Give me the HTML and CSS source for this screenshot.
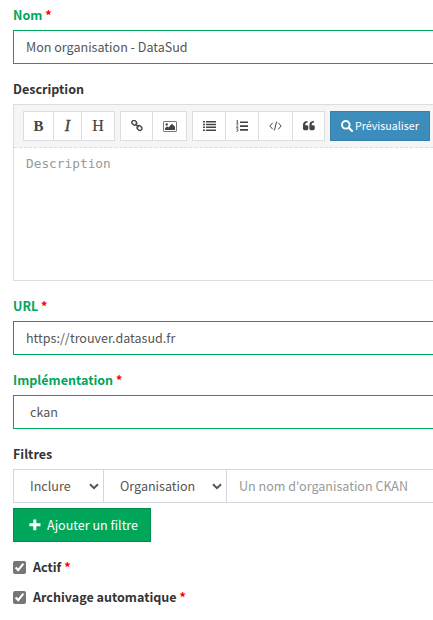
FILE: index.html
```html
<!DOCTYPE html>
<html lang="fr">
<head>
<meta charset="utf-8">
<title>Mon organisation</title>
<link rel="stylesheet" href="styles.css">
</head>
<body>
<form class="form">
  <div class="group valid">
    <label class="label" for="name">Nom <span class="req">*</span></label>
    <input class="control" id="name" type="text" value="Mon organisation - DataSud">
  </div>

  <div class="group">
    <label class="label" for="desc">Description</label>
    <div class="editor">
      <div class="toolbar">
        <div class="btn-group">
          <button type="button" class="tool w31"><b class="glyph">B</b></button>
          <button type="button" class="tool w29"><i class="glyph italic">I</i></button>
          <button type="button" class="tool w34"><span class="glyph heading">H</span></button>
        </div>
        <div class="btn-group">
          <button type="button" class="tool w33"><svg width="12" height="12" viewBox="0 0 12 12" fill="none" stroke="#444" stroke-width="1.4"><rect x="-2.5" y="-2" width="5" height="4" rx="1.6" transform="translate(3.300 2.800) rotate(45)"/><rect x="-2.5" y="-2" width="5" height="4" rx="1.6" transform="translate(8.500 8) rotate(45)"/><path d="M4.300 3.800l3.400 3.400"/></svg></button>
          <button type="button" class="tool w35"><svg width="14" height="11" viewBox="0 0 14 11"><rect x=".5" y=".5" width="13" height="10" rx=".6" fill="none" stroke="#777"/><circle cx="3.700" cy="3.400" r="1.200" fill="#444"/><path d="M2 9V7.200l2-2 1.300 1.300L9 2.800l3 3V9z" fill="#444"/></svg></button>
        </div>
        <div class="btn-group">
          <button type="button" class="tool w34"><svg width="13" height="10" viewBox="0 0 13 10" fill="#444"><path d="M0 0h2v1.500H0zM3 0h10v1.500H3zM0 2.800h2v1.500H0zM3 2.800h10v1.500H3zM0 5.600h2v1.500H0zM3 5.600h10v1.500H3zM0 8.400h2v1.500H0zM3 8.400h10v1.500H3z"/></svg></button>
          <button type="button" class="tool w34"><svg width="12" height="12" viewBox="0 0 12 12"><path d="M4 1.400h8v1.700H4zM4 5.200h8v1.700H4zM4 9h8v1.700H4z" fill="#444"/><path d="M.3 1L1.500.4V3.200M.3 3.200h2.200M.3 5c.5-.7 1.900-.5 1.700.4C1.900 6.100.5 6.500.4 7.400h2M.3 8.900h1.900L1.200 10c1.600 0 1.100 1.600-.9 1.400" fill="none" stroke="#444" stroke-width=".8"/></svg></button>
          <button type="button" class="tool w35"><svg width="13" height="10" viewBox="0 0 13 10" fill="none" stroke="#444" stroke-width="1"><path d="M3.700 1.800L.8 5l2.900 3.200M9.300 1.800L12.200 5 9.300 8.200M7.600.6L5.400 9.400"/></svg></button>
          <button type="button" class="tool w33"><svg width="12" height="10" viewBox="0 0 12 10" fill="#444"><path id="q" d="M5.300 5.600v2.200q0 1.400-1.400 1.400H1.500Q0 9.200 0 7.800V4Q0 .4 3.600 0H4.500v1.500H4Q2.200 1.700 2.200 3.700v.5h1.700q1.400 0 1.400 1.400z"/><use href="#q" x="6.400"/></svg></button>
        </div>
        <button type="button" class="preview"><svg width="12" height="12" viewBox="0 0 12 12" fill="none" stroke="#fff"><circle cx="4.800" cy="4.800" r="3.800" stroke-width="1.900"/><path d="M7.800 7.800l3.200 3.200" stroke-width="2.200" stroke-linecap="round"/></svg><span>Prévisualiser</span></button>
      </div>
      <textarea class="area" id="desc" placeholder="Description"></textarea>
    </div>
  </div>

  <div class="group valid">
    <label class="label" for="url">URL <span class="req">*</span></label>
    <input class="control" id="url" type="text" value="https://trouver.datasud.fr">
  </div>

  <div class="group valid">
    <label class="label" for="impl">Implémentation <span class="req">*</span></label>
    <select class="control select" id="impl"><option>ckan</option></select>
  </div>

  <div class="group">
    <label class="label">Filtres</label>
    <div class="filters">
      <div class="picker mode"><select class="control select"><option>Inclure</option></select><svg class="chevron" width="10" height="7" viewBox="0 0 10 7"><path d="M1 1.200l4 4 4-4" fill="none" stroke="#555" stroke-width="2"/></svg></div>
      <div class="picker kind"><select class="control select"><option>Organisation</option></select><svg class="chevron" width="10" height="7" viewBox="0 0 10 7"><path d="M1 1.200l4 4 4-4" fill="none" stroke="#555" stroke-width="2"/></svg></div>
      <input class="control value" type="text" placeholder="Un nom d'organisation CKAN">
    </div>
    <button type="button" class="add"><svg width="12" height="12" viewBox="0 0 12 12"><path d="M4.300 0.500h3v3.800h4.200v3H7.300v3.900h-3V7.300H.3v-3h4z" fill="#fff"/></svg><span>Ajouter un filtre</span></button>
  </div>

  <label class="check"><input type="checkbox" class="box" checked><span>Actif <span class="req">*</span></span></label>
  <label class="check"><input type="checkbox" class="box" checked><span>Archivage automatique <span class="req">*</span></span></label>
</form>
</body>
</html>
```
FILE: styles.css
```css
* { box-sizing: border-box; }
body {
  margin: 0;
  background: #fff;
  color: #333;
  font: 12.55px/20px "Noto Sans CJK SC", "Noto Sans", sans-serif;
}
button, input, select, textarea { font: inherit; margin: 0; }
svg { display: block; flex: none; }
.form { padding: 5px 0 0 13px; }
.group { margin-bottom: 15px; }
.label { display: block; height: 20px; margin-bottom: 5px; font-weight: 700; }
.valid .label { color: #00a65a; }
.label .req, .check .req { color: #f00; }
.control {
  display: block;
  width: 100%;
  height: 34px;
  padding: 5px 12px 7px;
  border: 1px solid #d2d6de;
  border-right-width: 0;
  border-radius: 0;
  background: #fff;
  color: #555;
  appearance: none;
  outline: none;
}
.valid .control { border-color: #00a65a; }
.select { padding: 6px 12px 6px 16px; }
::placeholder { color: #999; opacity: 1; }

.editor { height: 177px; border: 1px solid #ddd; border-right: 0; }
.toolbar {
  display: flex;
  gap: 5px;
  height: 43px;
  padding: 6px 0 6px 9px;
  background: #f5f5f5;
  border-bottom: 1px dashed #ddd;
}
.btn-group { display: flex; }
.tool {
  display: flex;
  align-items: center;
  justify-content: center;
  height: 30px;
  padding: 0;
  border: 1px solid #ddd;
  background: #fff;
  color: #444;
}
.tool + .tool { margin-left: -1px; }
.w29 { width: 29px; }
.w31 { width: 31px; }
.w33 { width: 33px; }
.w34 { width: 34px; }
.w35 { width: 35px; }
.glyph { font: 700 15px/20px "Liberation Serif", serif; }
.italic { font-weight: 400; font-style: italic; font-size: 16px; -webkit-text-stroke: .4px #444; }
.heading { font-weight: 400; font-size: 16px; -webkit-text-stroke: .2px #444; }
.preview {
  display: flex;
  align-items: center;
  gap: 2px;
  width: 100px;
  height: 30px;
  padding: 0 0 0 10px;
  border: 1px solid #367fa9;
  background: #3c8dbc;
  color: #fff;
  font-size: 10.7px;
  white-space: nowrap;
}
.area {
  display: block;
  width: 100%;
  height: 132px;
  padding: 6px 12px;
  border: 0;
  resize: none;
  font: 12.8px/20px "DejaVu Sans Mono", monospace;
}

.filters { display: flex; }
.picker { position: relative; }
.mode { width: 90px; }
.kind { width: 123px; }
.value { flex: 1; }
.chevron { position: absolute; right: 4px; top: 14px; }
.add {
  display: flex;
  align-items: center;
  gap: 6px;
  width: 138px;
  height: 34px;
  margin-top: 5px;
  padding: 0 0 0 15px;
  border: 1px solid #008d4c;
  background: #00a65a;
  color: #fff;
  white-space: nowrap;
}
.check { display: flex; align-items: center; gap: 7px; height: 20px; margin-bottom: 10px; font-weight: 700; }
.box { width: 13px; height: 13px; accent-color: #767676; }
```
